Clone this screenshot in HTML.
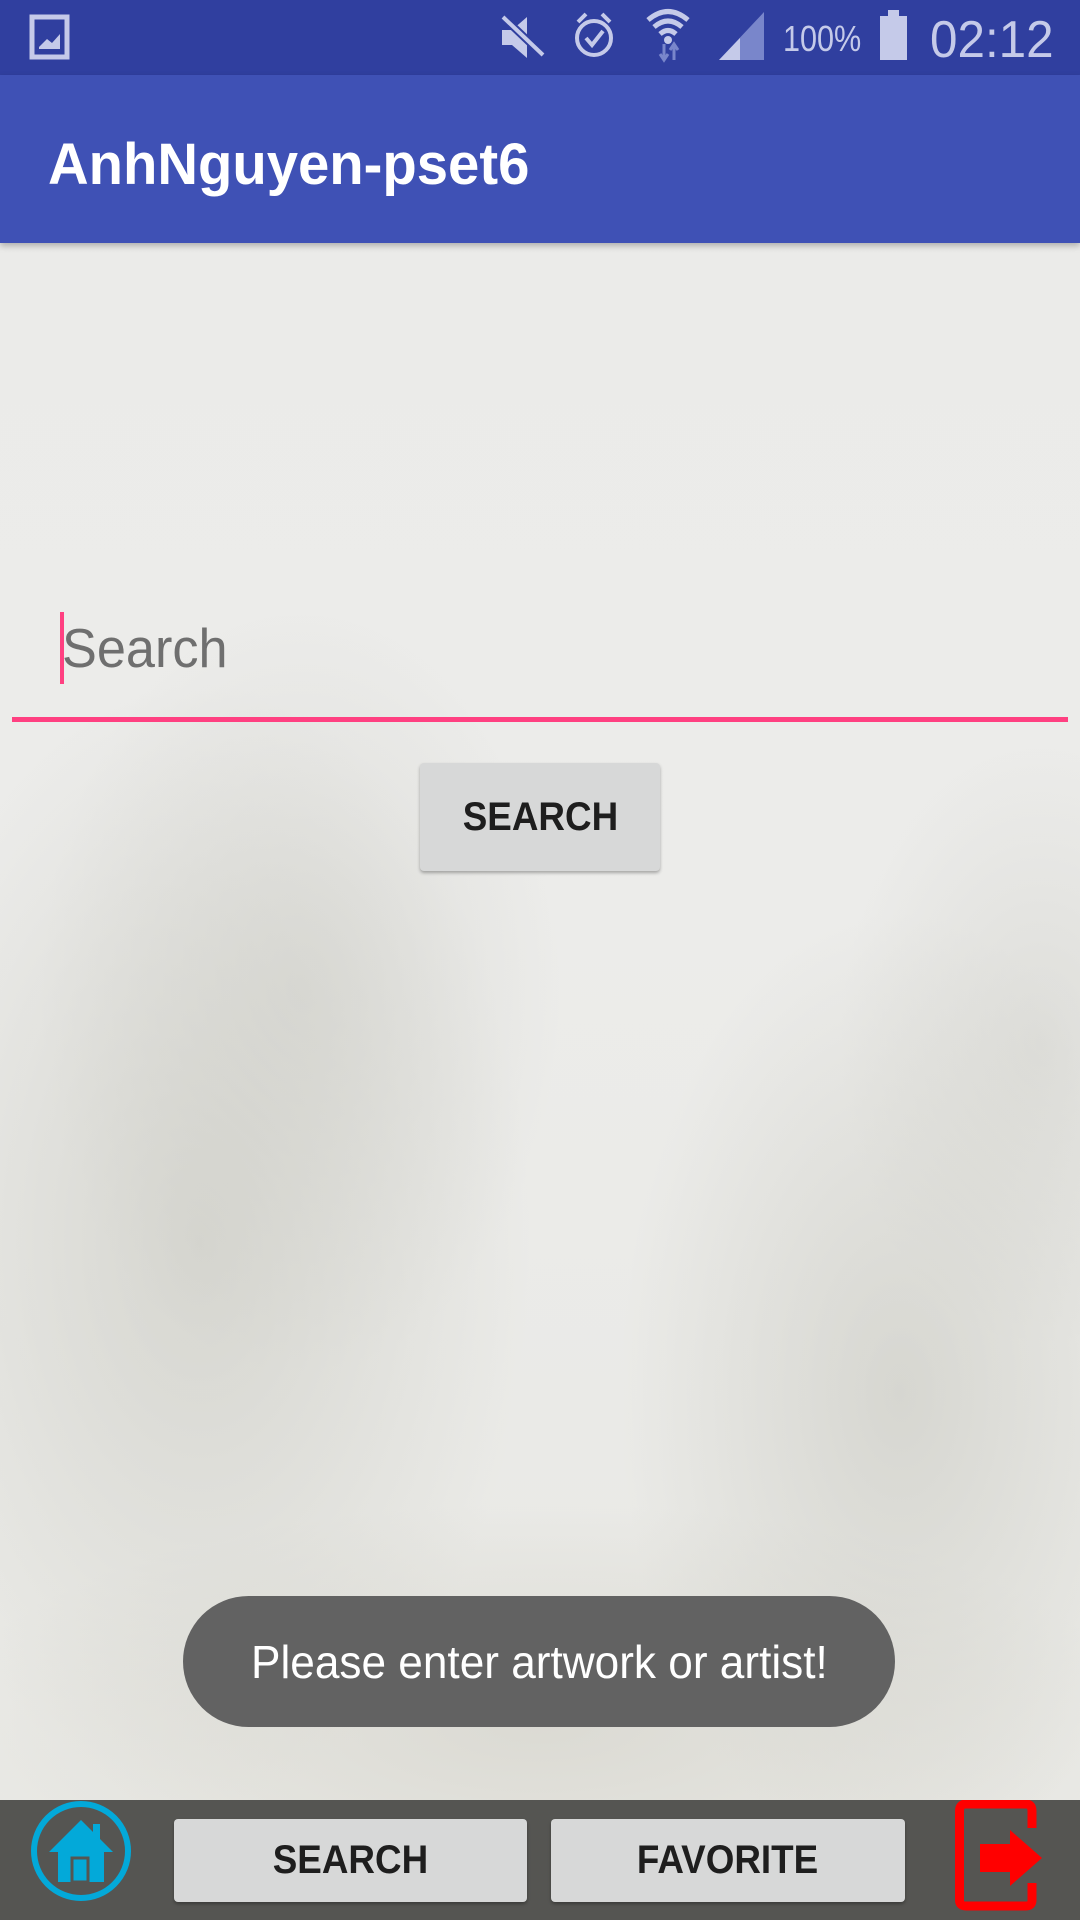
<!DOCTYPE html>
<html><head><meta charset="utf-8"><style>
*{margin:0;padding:0;box-sizing:border-box}
body{width:1080px;height:1920px;overflow:hidden;font-family:"Liberation Sans",sans-serif;position:relative;background:#ebebe8}
.bg{position:absolute;left:0;top:243px;width:1080px;height:1557px;
background:
radial-gradient(ellipse 330px 560px at 200px 1000px,rgba(200,200,192,.6),rgba(200,200,192,0) 100%),
radial-gradient(ellipse 260px 380px at 300px 750px,rgba(205,205,199,.5),rgba(205,205,199,0) 100%),
radial-gradient(ellipse 280px 480px at 900px 1150px,rgba(198,198,190,.55),rgba(198,198,190,0) 100%),
radial-gradient(ellipse 200px 300px at 1040px 800px,rgba(205,205,199,.45),rgba(205,205,199,0) 100%),
radial-gradient(ellipse 600px 220px at 540px 1480px,rgba(205,203,193,.5),rgba(205,203,193,0) 100%),
linear-gradient(#ebebe9,#ececea 40%,#e9e9e5);}
.sb{position:absolute;left:0;top:0;width:1080px;height:75px;background:#303F9F;color:#c5cae9}
.ab{position:absolute;left:0;top:75px;width:1080px;height:168px;background:#3F51B5;box-shadow:0 3px 6px rgba(0,0,0,.25)}
.title{position:absolute;left:48px;top:56px;color:#fff;font-size:58px;font-weight:bold;transform:scaleX(.97);transform-origin:left}
.hint{position:absolute;left:62px;top:616px;font-size:55px;color:#6f6f6f;transform:scaleX(.95);transform-origin:left}
.cursor{position:absolute;left:60px;top:612px;width:4px;height:72px;background:#FF4081}
.ul{position:absolute;left:12px;top:717px;width:1056px;height:5px;background:#FF4081}
.btn{position:absolute;background:#d7d8d8;border-radius:4px;box-shadow:0 2px 3px rgba(0,0,0,.3);color:#1e1e1e;font-weight:bold;font-size:40px;display:flex;align-items:center;justify-content:center}
.btn span{transform:scaleX(.92);display:inline-block}
.toast{position:absolute;left:183px;top:1596px;width:712px;height:131px;border-radius:66px;background:#626262;color:#fff;font-size:46px;display:flex;align-items:center;justify-content:center}
.toast span{transform:scaleX(.96);display:inline-block;white-space:nowrap}
.bb{position:absolute;left:0;top:1800px;width:1080px;height:120px;background:#555552}
</style></head><body>
<div class="bg"></div>
<div class="sb">
<svg width="1080" height="75" style="position:absolute;left:0;top:0">
<rect x="32" y="17" width="35" height="40" fill="none" stroke="#c5cae9" stroke-width="5"/>
<path d="M39 47 L47 39 L52 43 L60 34 L60 49 L39 49Z" fill="#c5cae9"/>
<path d="M502 30 L512 30 L527 17 L527 58 L512 45 L502 45Z" fill="#c5cae9"/>
<path d="M503 17 L543 55" stroke="#303F9F" stroke-width="8"/><path d="M503 17 L543 55" stroke="#c5cae9" stroke-width="4"/>
<circle cx="594" cy="38" r="17" fill="none" stroke="#c5cae9" stroke-width="4"/>
<path d="M586 38 L592 45 L603 31" stroke="#c5cae9" stroke-width="4" fill="none"/>
<path d="M578 22 L586 14 M610 22 L602 14" stroke="#c5cae9" stroke-width="4"/>
<path d="M648 20 Q668 3 688 20 M654 27 Q668 15 682 27 M660 34 Q668 27 676 34" stroke="#c5cae9" stroke-width="5" fill="none"/>
<circle cx="668" cy="40" r="4" fill="#c5cae9"/>
<path d="M664 44 L664 60 M660 54 L664 60 L668 54 M674 60 L674 44 M670 50 L674 44 L678 50" stroke="#7986cb" stroke-width="3" fill="none"/>
<path d="M719 60 L764 12 L764 60Z" fill="#7986cb"/><path d="M719 60 L740 38 L740 60Z" fill="#c5cae9"/>
<rect x="880" y="16" width="27" height="44" fill="#c5cae9"/><rect x="888" y="10" width="11" height="7" fill="#c5cae9"/>
</svg>
<div style="position:absolute;left:783px;top:18px;font-size:36px;transform:scaleX(.85);transform-origin:left">100%</div>
<div style="position:absolute;left:930px;top:10px;font-size:52px;transform:scaleX(.95);transform-origin:left">02:12</div>
</div>
<div class="ab"><div class="title">AnhNguyen-pset6</div></div>
<div class="hint">Search</div>
<div class="cursor"></div>
<div class="ul"></div>
<div class="btn" style="left:420px;top:763px;width:240px;height:108px"><span>SEARCH</span></div>
<div class="toast"><span>Please enter artwork or artist!</span></div>
<div class="bb">
<svg width="1080" height="120" style="position:absolute;left:0;top:0">
<circle cx="81" cy="51" r="47" fill="none" stroke="#03a9d9" stroke-width="6"/>
<path d="M81 20 L113 52 L104 52 L104 82 L58 82 L58 52 L49 52Z" fill="#03a9d9"/>
<rect x="93" y="24" width="7" height="18" fill="#03a9d9"/>
<rect x="72" y="58" width="16" height="24" fill="none" stroke="#555552" stroke-width="3"/>
<path d="M1032 28 L1032 11 Q1032 4 1026 4 L966 4 Q959.5 4 959.5 11 L959.5 100 Q959.5 106 966 106 L1026 106 Q1032 106 1032 100 L1032 83" fill="none" stroke="#ff0000" stroke-width="9"/>
<path d="M980 44 L1010 44 L1010 30 L1042 58 L1010 86 L1010 72 L980 72Z" fill="#ff0000"/>
</svg>
</div>
<div class="btn" style="left:174px;top:1819px;width:353px;height:83px"><span>SEARCH</span></div>
<div class="btn" style="left:551px;top:1819px;width:354px;height:83px"><span>FAVORITE</span></div>
</body></html>
